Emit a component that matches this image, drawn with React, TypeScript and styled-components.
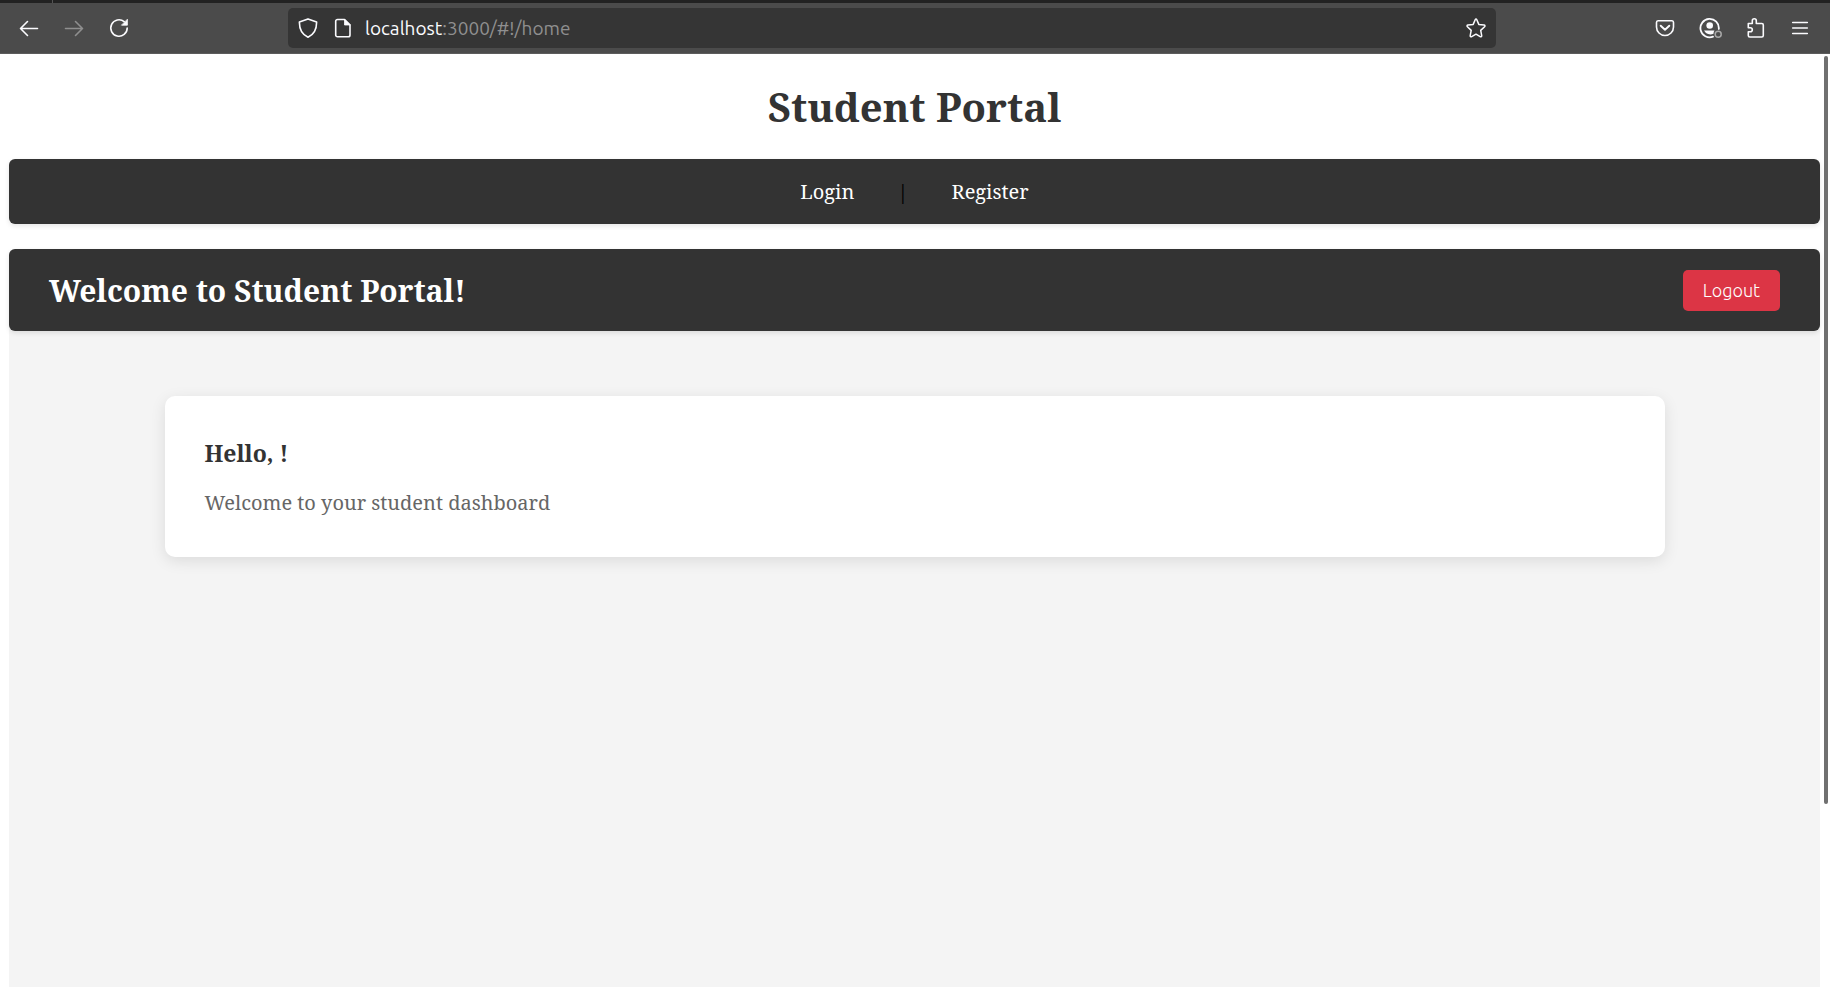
import React from 'react';
import styled, { createGlobalStyle } from 'styled-components';

const serif = '"Noto Serif", "Droid Serif", "DejaVu Serif Condensed", "DejaVu Serif", serif';
const ui = 'Ubuntu, "Open Sans", "Noto Sans", sans-serif';

const Global = createGlobalStyle`
  *, *::before, *::after { box-sizing: border-box; }
  body { margin: 0; background: #fff; font-family: ${serif}; }
  h1, h2, h3, p { margin: 0; }
`;

const Browser = styled.div`
  height: 100vh;
  display: flex;
  flex-direction: column;
  overflow: hidden;
`;

const TabStrip = styled.div`
  flex: none;
  height: 3px;
  background: #222;
  display: flex;
`;

const ActiveTab = styled.div`
  width: 53px;
  border-right: 1px solid #555;
`;

const Toolbar = styled.div`
  flex: none;
  height: 51px;
  background: #4b4b4b;
  border-bottom: 1px solid #5c5c5c;
  display: grid;
  grid-template-columns: 288px minmax(0, 1fr) 334px;
  align-items: center;
`;

const ToolGroup = styled.div<{ $end?: boolean }>`
  display: flex;
  gap: 13px;
  padding: 0 14px 0 13px;
  justify-content: ${({ $end }) => ($end ? 'flex-end' : 'flex-start')};
`;

const IconButton = styled.button<{ $dim?: boolean }>`
  width: 32px;
  height: 32px;
  padding: 0;
  border: 0;
  background: none;
  color: ${({ $dim }) => ($dim ? '#8f8f8f' : '#fbfbfe')};
  display: grid;
  place-items: center;
`;

const AddressBar = styled.div`
  height: 40px;
  border-radius: 5px;
  background: #353535;
  color: #e8e8e8;
  display: flex;
  align-items: center;
  padding: 0 4px;
  gap: 3px;
`;

const Address = styled.a`
  flex: 1;
  font: 400 19px/24px ${ui};
  color: #8f8f8f;
  text-decoration: none;
  margin-left: 3px;
`;

const Host = styled.span`
  color: #fbfbfe;
`;

const Viewport = styled.div`
  flex: 1;
  min-height: 0;
  display: flex;
`;

const Page = styled.div`
  flex: 1;
  min-width: 0;
  padding: 26px 1px 0 9px;
  display: flex;
  flex-direction: column;
`;

const Scrollbar = styled.div`
  flex: none;
  width: 9px;
  padding: 2px 2px 0 3px;
`;

const Thumb = styled.div`
  height: 80.3%;
  border-radius: 2px;
  background: #707070;
`;

const Title = styled.h1`
  font-size: 40px;
  line-height: 54px;
  color: #333;
  text-align: center;
  margin-bottom: 25px;
`;

const Nav = styled.nav`
  flex: none;
  height: 65px;
  margin-bottom: 25px;
  border-radius: 6px;
  background: #333;
  box-shadow: 0 2px 5px rgba(0, 0, 0, 0.1);
  display: flex;
  align-items: center;
  justify-content: center;
  gap: 43px;
  font-size: 20px;
  line-height: 28px;
  color: #000;
`;

const NavLink = styled.a`
  color: #fff;
  text-decoration: none;
`;

const Dashboard = styled.main`
  flex: 1;
  background: #f4f4f4;
  border-radius: 6px 6px 0 0;
`;

const Header = styled.header`
  height: 82px;
  padding: 0 40px;
  border-radius: 6px;
  background: #333;
  box-shadow: 0 2px 5px rgba(0, 0, 0, 0.1);
  display: flex;
  align-items: center;
  justify-content: space-between;
`;

const HeaderTitle = styled.h2`
  font-size: 30px;
  line-height: 40px;
  padding-top: 2px;
  color: #fff;
`;

const LogoutButton = styled.button`
  height: 41px;
  padding: 0 20px;
  border: 0;
  border-radius: 5px;
  background: #dc3545;
  color: #fff;
  font: 300 18px/24px ${ui};
`;

const Card = styled.section`
  max-width: 1500px;
  margin: 65px auto 0;
  padding: 40px;
  border-radius: 10px;
  background: #fff;
  box-shadow: 0 4px 15px rgba(0, 0, 0, 0.1);
`;

const Greeting = styled.h3`
  font-size: 23px;
  line-height: 35px;
  color: #333;
  margin-bottom: 18px;
`;

const Message = styled.p`
  font-size: 20px;
  line-height: 28px;
  color: #666;
`;

const Icon = ({ children, size = 20 }: { children: React.ReactNode; size?: number }) => (
  <svg width={size} height={size} viewBox="0 0 20 20" fill="none" stroke="currentColor" strokeWidth="1.6" strokeLinecap="round" strokeLinejoin="round" aria-hidden="true">
    {children}
  </svg>
);

export default function App() {
  return (
    <Browser>
      <Global />
      <TabStrip><ActiveTab /></TabStrip>
      <Toolbar>
        <ToolGroup>
          <IconButton aria-label="Back">
            <Icon><path d="M18.500 10.500H1.500M8.500 3.500l-7 7 7 7" /></Icon>
          </IconButton>
          <IconButton aria-label="Forward" $dim disabled>
            <Icon><path d="M1.500 10.500h17M11.500 3.500l7 7-7 7" /></Icon>
          </IconButton>
          <IconButton aria-label="Reload">
            <Icon>
              <path d="M18.200 10a8.200 8.200 0 1 1-3-6.300" />
              <path d="M18.400 1.600v5.600h-5.600z" fill="currentColor" strokeWidth="0.8" />
            </Icon>
          </IconButton>
        </ToolGroup>
        <AddressBar>
          <IconButton aria-label="Tracking protection">
            <Icon><path d="M10 .9l8.600 3.200C18.700 11 16 16.500 10 19.200 4 16.500 1.300 11 1.400 4.100z" /></Icon>
          </IconButton>
          <IconButton aria-label="Site information">
            <Icon>
              <path d="M4.500 1.500h7l5.500 5.500v10a1.800 1.800 0 0 1-1.800 1.800H4.500A1.800 1.800 0 0 1 2.700 17V3.300a1.800 1.800 0 0 1 1.800-1.800z" />
              <path d="M11.500 1.500V7H17z" fill="currentColor" strokeWidth="0.8" />
            </Icon>
          </IconButton>
          <Address href="#!/home"><Host>localhost</Host>:3000/#!/home</Address>
          <IconButton aria-label="Bookmark this page">
            <Icon><path d="M10.700 1.500l2.100 4.900 5.300.6c.9.100 1.200 1.100.5 1.700l-3.900 3.700 1 5.200c.2.900-.7 1.500-1.500 1.100L10 16.200l-4.300 2.500c-.8.400-1.700-.2-1.500-1.100l1-5.200-3.800-3.700C.7 8.100 1 7.100 1.900 7l5.300-.6 2.100-4.900c.3-.7 1.100-.7 1.400 0z" strokeWidth="1.500" /></Icon>
          </IconButton>
        </AddressBar>
        <ToolGroup $end>
          <IconButton aria-label="Save to Pocket">
            <Icon>
              <path d="M3 2.800h14A1.600 1.600 0 0 1 18.500 4.400V9a8.500 8.500 0 0 1-17 0V4.400A1.600 1.600 0 0 1 3 2.800z" />
              <path d="M5.700 7.700L10 11.800l4.300-4.100" strokeWidth="1.900" />
            </Icon>
          </IconButton>
          <IconButton aria-label="Account">
            <svg width="24" height="22" viewBox="0 0 24 22" fill="none" aria-hidden="true">
              <path d="M20.800 12A9.200 9.200 0 1 0 15 19.700" stroke="currentColor" strokeWidth="1.800" strokeLinecap="round" />
              <circle cx="11.700" cy="8.500" r="3.300" fill="currentColor" />
              <path d="M6 13.500h10.500a5.500 5.500 0 0 0-1 3.300A7.300 7.300 0 0 1 6 13.500z" fill="currentColor" />
              <circle cx="20.200" cy="17.300" r="3" stroke="#a8a8a8" strokeWidth="1.500" />
            </svg>
          </IconButton>
          <IconButton aria-label="Extensions">
            <Icon><path d="M3.300 5.500h4V2.800a2 2 0 0 1 4 0v2.700h5.500A1.500 1.500 0 0 1 18.300 7v10.500a1.500 1.500 0 0 1-1.500 1.500h-12a1.500 1.500 0 0 1-1.500-1.500v-3.700h2a2 2 0 0 0 0-4h-2z" /></Icon>
          </IconButton>
          <IconButton aria-label="Menu">
            <Icon><path d="M2.700 4.500h14.600M2.700 10h14.600M2.700 15.500h14.600" /></Icon>
          </IconButton>
        </ToolGroup>
      </Toolbar>
      <Viewport>
        <Page>
          <Title>Student Portal</Title>
          <Nav>
            <NavLink href="#!/login">Login</NavLink>
            <span>|</span>
            <NavLink href="#!/register">Register</NavLink>
          </Nav>
          <Dashboard>
            <Header>
              <HeaderTitle>Welcome to Student Portal!</HeaderTitle>
              <LogoutButton>Logout</LogoutButton>
            </Header>
            <Card>
              <Greeting>Hello, !</Greeting>
              <Message>Welcome to your student dashboard</Message>
            </Card>
          </Dashboard>
        </Page>
        <Scrollbar><Thumb /></Scrollbar>
      </Viewport>
    </Browser>
  );
}
